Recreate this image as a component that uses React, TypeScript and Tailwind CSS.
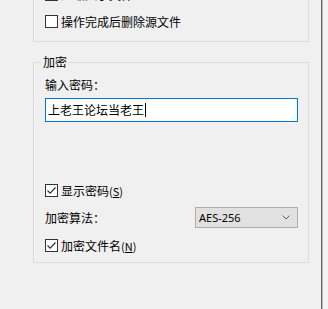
import React from "react";

const cjk = { fontFamily: '"Noto Sans CJK SC", "Noto Sans", sans-serif' };

function Box({ checked }: { checked?: boolean }) {
  return (
    <div className="w-[13px] h-[13px] shrink-0 border border-[#333333] bg-white flex items-center justify-center">
      {checked && (
        <svg width="11" height="11" viewBox="0 0 11 11">
          <path d="M1.5 5.5 L4.2 8.2 L9.5 2.5" fill="none" stroke="#333" strokeWidth="1.2" />
        </svg>
      )}
    </div>
  );
}

function Check({ checked, label, mn }: { checked?: boolean; label: string; mn?: string }) {
  return (
    <div className="h-[13px] flex items-center gap-[3px]">
      <Box checked={checked} />
      <span className="text-[12px] leading-[16px] text-black whitespace-nowrap" style={cjk}>
        {label}
        {mn && (
          <span className="text-[11px]">
            (<span className="underline">{mn}</span>)
          </span>
        )}
      </span>
    </div>
  );
}

export default function App() {
  return (
    <div className="w-[328px] h-[309px] flex overflow-hidden bg-[#f0f0f0]">
      <div className="w-[321px] flex flex-col">
        {/* top group, cut off above */}
        <div className="-mt-[20px] ml-[33px] w-[276px] h-[62px] border border-[#dcdcdc] pl-[11px] pt-[7px] flex flex-col gap-[14px]">
          <Check label="压缩入子文件" />
          <Check label="操作完成后删除源文件" />
        </div>

        {/* encryption group */}
        <div className="relative mt-[20px] ml-[33px] w-[276px] border border-[#dcdcdc] pl-[11px] pt-[14px] pb-[10px] flex flex-col">
          <span
            className="absolute -top-[9px] left-[7px] px-[2px] bg-[#f0f0f0] text-[12px] leading-[16px] text-black"
            style={cjk}
          >
            加密
          </span>
          <div className="h-[16px] text-[12px] leading-[16px] text-black" style={cjk}>
            输入密码：
          </div>
          <div className="mt-[5px] w-[253px] h-[24px] border border-[#0078d7] bg-white px-[2px] flex items-center">
            <span className="text-[12px] leading-[16px] text-black" style={cjk}>
              上老王论坛当老王
            </span>
            <span className="w-[1px] h-[14px] bg-black ml-[1px]" />
          </div>
          <div className="mt-[62px]">
            <Check checked label="显示密码" mn="S" />
          </div>
          <div className="mt-[10px] w-[253px] h-[21px] flex items-center justify-between">
            <span className="text-[12px] leading-[16px] text-black" style={cjk}>
              加密算法：
            </span>
            <div className="w-[103px] h-[21px] border border-[#adadad] bg-[#e1e1e1] flex items-center justify-between pl-[3px] pr-[7px]">
              <span
                className="text-[11px] leading-[15px] text-black"
                style={{ fontFamily: '"Noto Sans", sans-serif' }}
              >
                AES-256
              </span>
              <svg width="8" height="5" viewBox="0 0 8 5">
                <path d="M0.5 0.5 L4 4 L7.5 0.5" fill="none" stroke="#606060" strokeWidth="1" />
              </svg>
            </div>
          </div>
          <div className="mt-[11px]">
            <Check checked label="加密文件名" mn="N" />
          </div>
        </div>
      </div>
      <div className="w-[1px] bg-[#6b6b6b]" />
      <div className="w-[1px] bg-[#b8b8b8]" />
      <div className="flex-1 bg-[#f4f4f4]" />
    </div>
  );
}
